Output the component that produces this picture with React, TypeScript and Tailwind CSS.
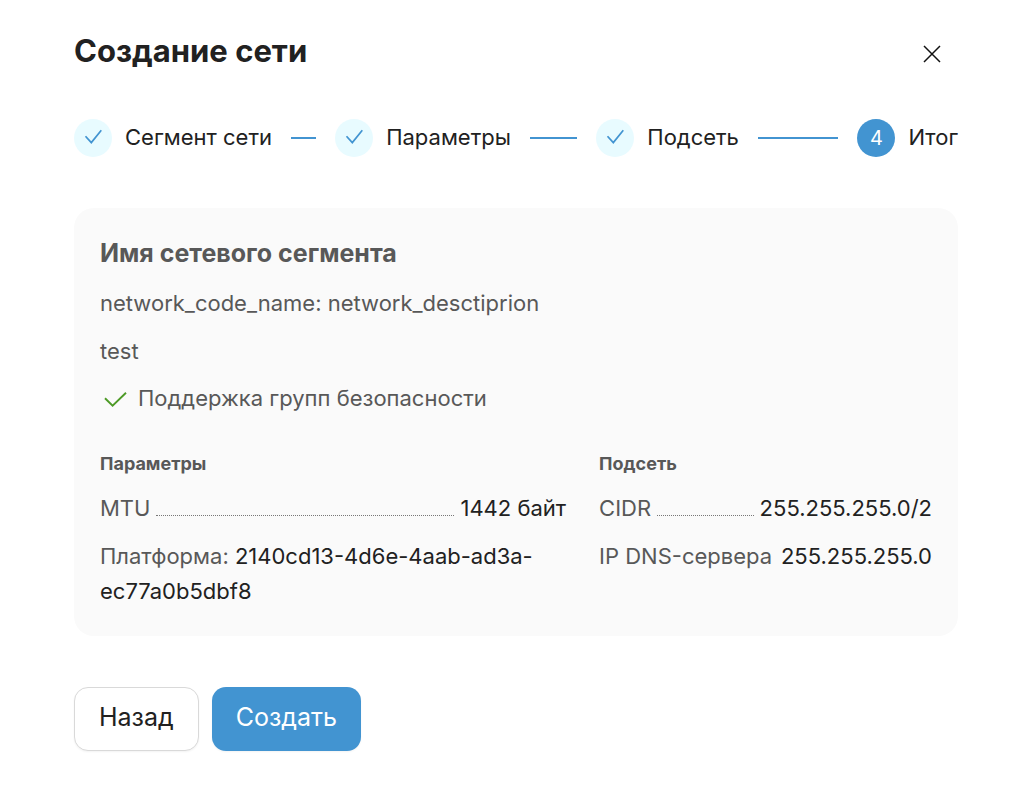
import React from "react";

const steps = ["Сегмент сети", "Параметры", "Подсеть", "Итог"];

function StepMark({ index }: { index: number }) {
  const current = index === steps.length - 1;
  if (current) {
    return (
      <span className="flex size-[38px] shrink-0 items-center justify-center rounded-full bg-[#4294d1] text-xl text-white">
        {index + 1}
      </span>
    );
  }
  return (
    <span className="flex size-[38px] shrink-0 items-center justify-center rounded-full bg-[#e8fbff]">
      <svg width="38" height="38" viewBox="0 0 38 38" fill="none" stroke="#4294d1" strokeWidth="1.7" aria-hidden="true">
        <path d="M11.5 17.2 17.3 23.6 27.3 11.2" />
      </svg>
    </span>
  );
}

function Leader() {
  return <span className="mb-2.5 min-w-0 flex-1 self-end border-b border-dotted border-[#777777]" />;
}

export default function App() {
  return (
    <main className="bg-white pt-7 pr-[62px] pb-10 pl-[74px] font-['Inter','Noto_Sans',sans-serif] text-[22px] leading-[35px] text-[#212121]">
      <header className="flex items-center justify-between">
        <h1 className="text-[31px] leading-[46px] font-bold">Создание сети</h1>
        <button type="button" aria-label="Закрыть" className="mt-1.5 mr-2.5 flex size-8 items-center justify-center">
          <svg width="18" height="18" viewBox="0 0 18 18" fill="none" stroke="#111111" strokeWidth="1.5" aria-hidden="true">
            <path d="M1 1 17 17M17 1 1 17" />
          </svg>
        </button>
      </header>

      <ol className="mt-[45px] flex">
        {steps.map((label, i) => (
          <li
            key={label}
            aria-current={i === steps.length - 1 ? "step" : undefined}
            className={i === steps.length - 1 ? "flex items-center" : "flex flex-1 items-center"}
          >
            <StepMark index={i} />
            <span className="ml-[13px] pb-0.5 whitespace-nowrap">{label}</span>
            {i < steps.length - 1 && <span className="mx-[19px] h-0.5 flex-1 bg-[#4294d1]" />}
          </li>
        ))}
      </ol>

      <section className="mt-[51px] rounded-[20px] bg-[#fafafa] px-[26px] py-[27px] text-[#585858]">
        <h2 className="text-[25px] leading-9 font-bold">Имя сетевого сегмента</h2>
        <p className="mt-[15px]">network_code_name: network_desctiprion</p>
        <p className="mt-[13px]">test</p>
        <p className="mt-3 flex items-center gap-2">
          <svg width="30" height="30" viewBox="0 0 30 30" fill="none" stroke="#4d9a26" strokeWidth="1.9" aria-hidden="true">
            <path d="M5 14.2 12.6 21.6 26 8.8" />
          </svg>
          Поддержка групп безопасности
        </p>

        <div className="mt-[33px] grid grid-cols-[minmax(0,7fr)_minmax(0,5fr)] gap-[33px]">
          <section>
            <h3 className="text-lg leading-[30px] font-bold">Параметры</h3>
            <dl className="mt-3">
              <div className="flex gap-1.5">
                <dt>MTU</dt>
                <Leader />
                <dd className="text-[#212121]">1442 байт</dd>
              </div>
              <div className="mt-[13px]">
                <dt className="inline">Платформа: </dt>
                <dd className="inline text-[#212121]">2140cd13-4d6e-4aab-ad3a-ec77a0b5dbf8</dd>
              </div>
            </dl>
          </section>
          <section>
            <h3 className="text-lg leading-[30px] font-bold">Подсеть</h3>
            <dl className="mt-3">
              <div className="flex gap-1.5">
                <dt>CIDR</dt>
                <Leader />
                <dd className="text-[#212121]">255.255.255.0/2</dd>
              </div>
              <div className="mt-[13px] flex justify-between whitespace-nowrap">
                <dt>IP DNS-сервера</dt>
                <dd className="text-[#212121]">255.255.255.0</dd>
              </div>
            </dl>
          </section>
        </div>
      </section>

      <div className="mt-[51px] flex gap-[13px] text-[25px]">
        <button type="button" className="h-16 rounded-[14px] border border-[#d9d9d9] bg-white px-6 pb-1 shadow-xs">
          Назад
        </button>
        <button type="button" className="h-16 rounded-[14px] bg-[#4294d1] px-6 pb-1 text-white shadow-xs">
          Создать
        </button>
      </div>
    </main>
  );
}
